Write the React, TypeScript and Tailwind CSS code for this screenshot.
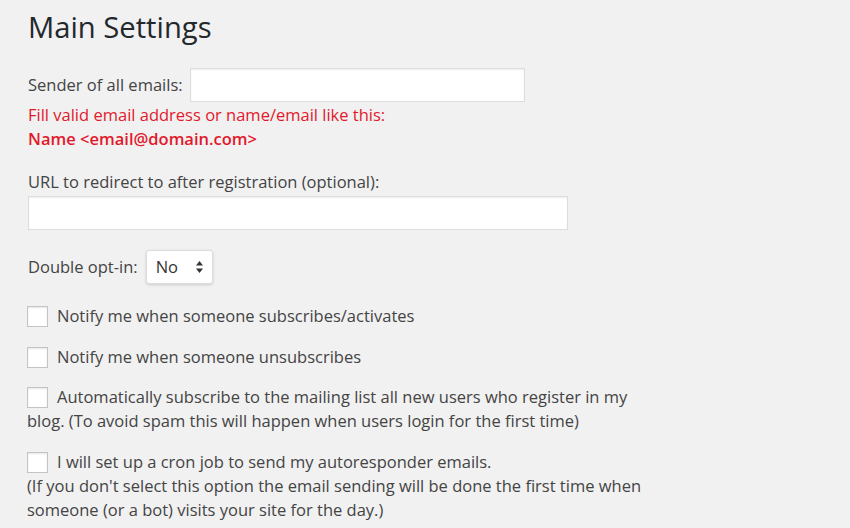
import React from "react";

function Checkbox() {
  return (
    <span className="inline-block align-middle w-[21px] h-[21px] mr-[9px] -mt-[3px] bg-white border border-[#c2c4c6] shadow-[inset_0_1px_2px_rgba(0,0,0,0.1)]" />
  );
}

export default function App() {
  return (
    <div
      className="w-[850px] h-[528px] overflow-hidden bg-[#f1f1f1] text-[#444] text-[16.5px] leading-[24px] pl-[28px]"
      style={{ fontFamily: '"Open Sans", "Noto Sans", sans-serif' }}
    >
      <h2 className="text-[29.2px] leading-[36px] pt-[9px] text-[#23282d] font-normal">Main Settings</h2>

      <div className="flex items-center mt-[23px]">
        <span>Sender of all emails:</span>
        <div className="ml-[7px] w-[335px] h-[34px] bg-white border border-[#dddddd] shadow-[inset_0_1px_2px_rgba(0,0,0,0.07)]" />
      </div>
      <div className="mt-[1px] text-[#e2192c]">
        <div>Fill valid email address or name/email like this:</div>
        <div className="font-semibold">Name &lt;email@domain.com&gt;</div>
      </div>

      <div className="mt-[19px]">URL to redirect to after registration (optional):</div>
      <div className="mt-[2px] w-[540px] h-[34px] bg-white border border-[#dddddd] shadow-[inset_0_1px_2px_rgba(0,0,0,0.07)]" />

      <div className="flex items-center mt-[20px]">
        <span>Double opt-in:</span>
        <div className="ml-[8px] w-[67px] h-[34px] flex items-center justify-between pl-[9px] pr-[8px] bg-white border border-[#dddddd] rounded-[3px] shadow-[0_1px_3px_rgba(0,0,0,0.15)] text-[#333]">
          <span>No</span>
          <svg width="9" height="14" viewBox="0 0 9 14">
            <path d="M4.5 1 L8 5.5 L1 5.5 Z" fill="#333" />
            <path d="M4.5 13 L8 8.5 L1 8.5 Z" fill="#333" />
          </svg>
        </div>
      </div>

      <div className="mt-[20px] -ml-[1px]">
        <p className="mb-[17px]">
          <Checkbox />
          Notify me when someone subscribes/activates
        </p>
        <p className="mb-[16px]">
          <Checkbox />
          Notify me when someone unsubscribes
        </p>
        <p className="mb-[17px] w-[640px]">
          <Checkbox />
          Automatically subscribe to the mailing list all new users who register in my blog. (To avoid spam this will happen when users login for the first time)
        </p>
        <p className="w-[650px]">
          <Checkbox />
          I will set up a cron job to send my autoresponder emails.
          <br />
          (If you don't select this option the email sending will be done the first time when someone (or a bot) visits your site for the day.)
        </p>
      </div>
    </div>
  );
}
